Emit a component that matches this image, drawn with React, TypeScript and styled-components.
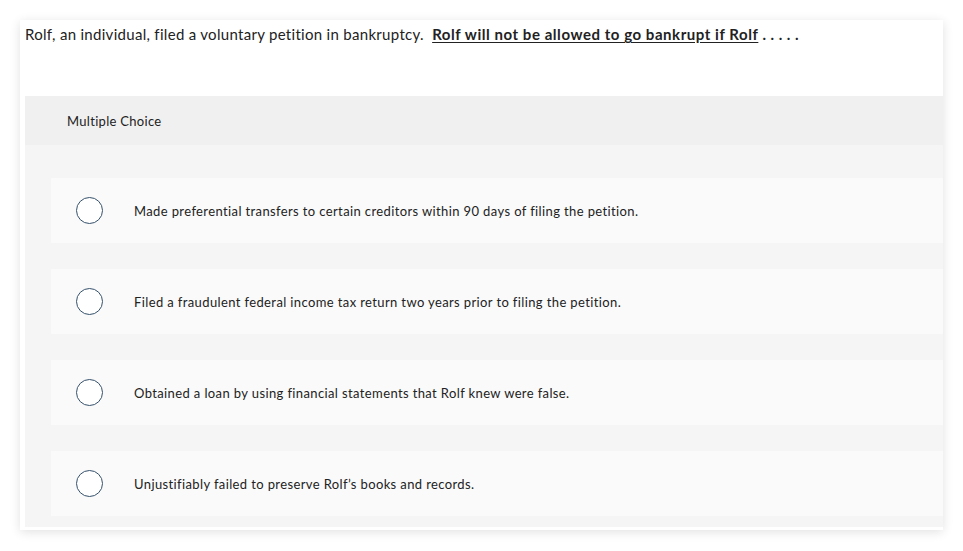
import React from 'react';
import styled, { createGlobalStyle } from 'styled-components';

const GlobalStyle = createGlobalStyle`
  html, body {
    margin: 0;
    padding: 0;
    background: #ffffff;
  }
  body {
    font-family: Lato, "Open Sans", Arial, sans-serif;
    color: #222;
  }
`;

const Page = styled.div`
  padding: 20px 20px 21px 20px;
`;

const Card = styled.div`
  background: #ffffff;
  box-shadow: 0 2px 10px rgba(0, 0, 0, 0.12);
  padding: 0 0 3px 5px;
`;

const Question = styled.p`
  margin: 0;
  padding: 5px 0 0 0;
  height: 71px;
  font-size: 15px;
  line-height: 18px;
  letter-spacing: 0.3px;
  color: #222;

  strong {
    font-weight: 700;
    letter-spacing: 0.55px;
    text-decoration: underline;
    text-underline-offset: 2px;
  }

  b {
    letter-spacing: 0.45px;
  }
`;

const Choices = styled.div`
  background: #f5f5f5;
`;

const ChoiceHeader = styled.div`
  background: #f0f0f0;
  height: 49px;
  display: flex;
  align-items: center;
  padding-left: 42px;
  font-size: 13px;
  letter-spacing: 0.3px;
  color: #222;
`;

const OptionList = styled.div`
  display: flex;
  flex-direction: column;
  gap: 26px;
  padding: 33px 0 11px 26px;
`;

const Option = styled.label`
  display: flex;
  align-items: center;
  height: 65px;
  background: #fafafa;
  padding-left: 25px;
  font-size: 13px;
  letter-spacing: 0.38px;
  color: #222;
  cursor: pointer;
`;

const Radio = styled.span`
  width: 25px;
  height: 25px;
  border: 1.5px solid #34506b;
  border-radius: 50%;
  background: #ffffff;
  flex: none;
  margin-right: 31px;
`;

const options = [
  'Made preferential transfers to certain creditors within 90 days of filing the petition.',
  'Filed a fraudulent federal income tax return two years prior to filing the petition.',
  'Obtained a loan by using financial statements that Rolf knew were false.',
  'Unjustifiably failed to preserve Rolf\u2019s books and records.',
];

const App: React.FC = () => {
  return (
    <>
      <GlobalStyle />
      <Page>
        <Card>
          <Question>
            Rolf, an individual, filed a voluntary petition in bankruptcy.&nbsp;{' '}
            <strong>Rolf will not be allowed to go bankrupt if Rolf</strong>{' '}
            <b>. . . . .</b>
          </Question>
          <Choices>
            <ChoiceHeader>Multiple Choice</ChoiceHeader>
            <OptionList>
              {options.map((text) => (
                <Option key={text}>
                  <Radio />
                  {text}
                </Option>
              ))}
            </OptionList>
          </Choices>
        </Card>
      </Page>
    </>
  );
};

export default App;
